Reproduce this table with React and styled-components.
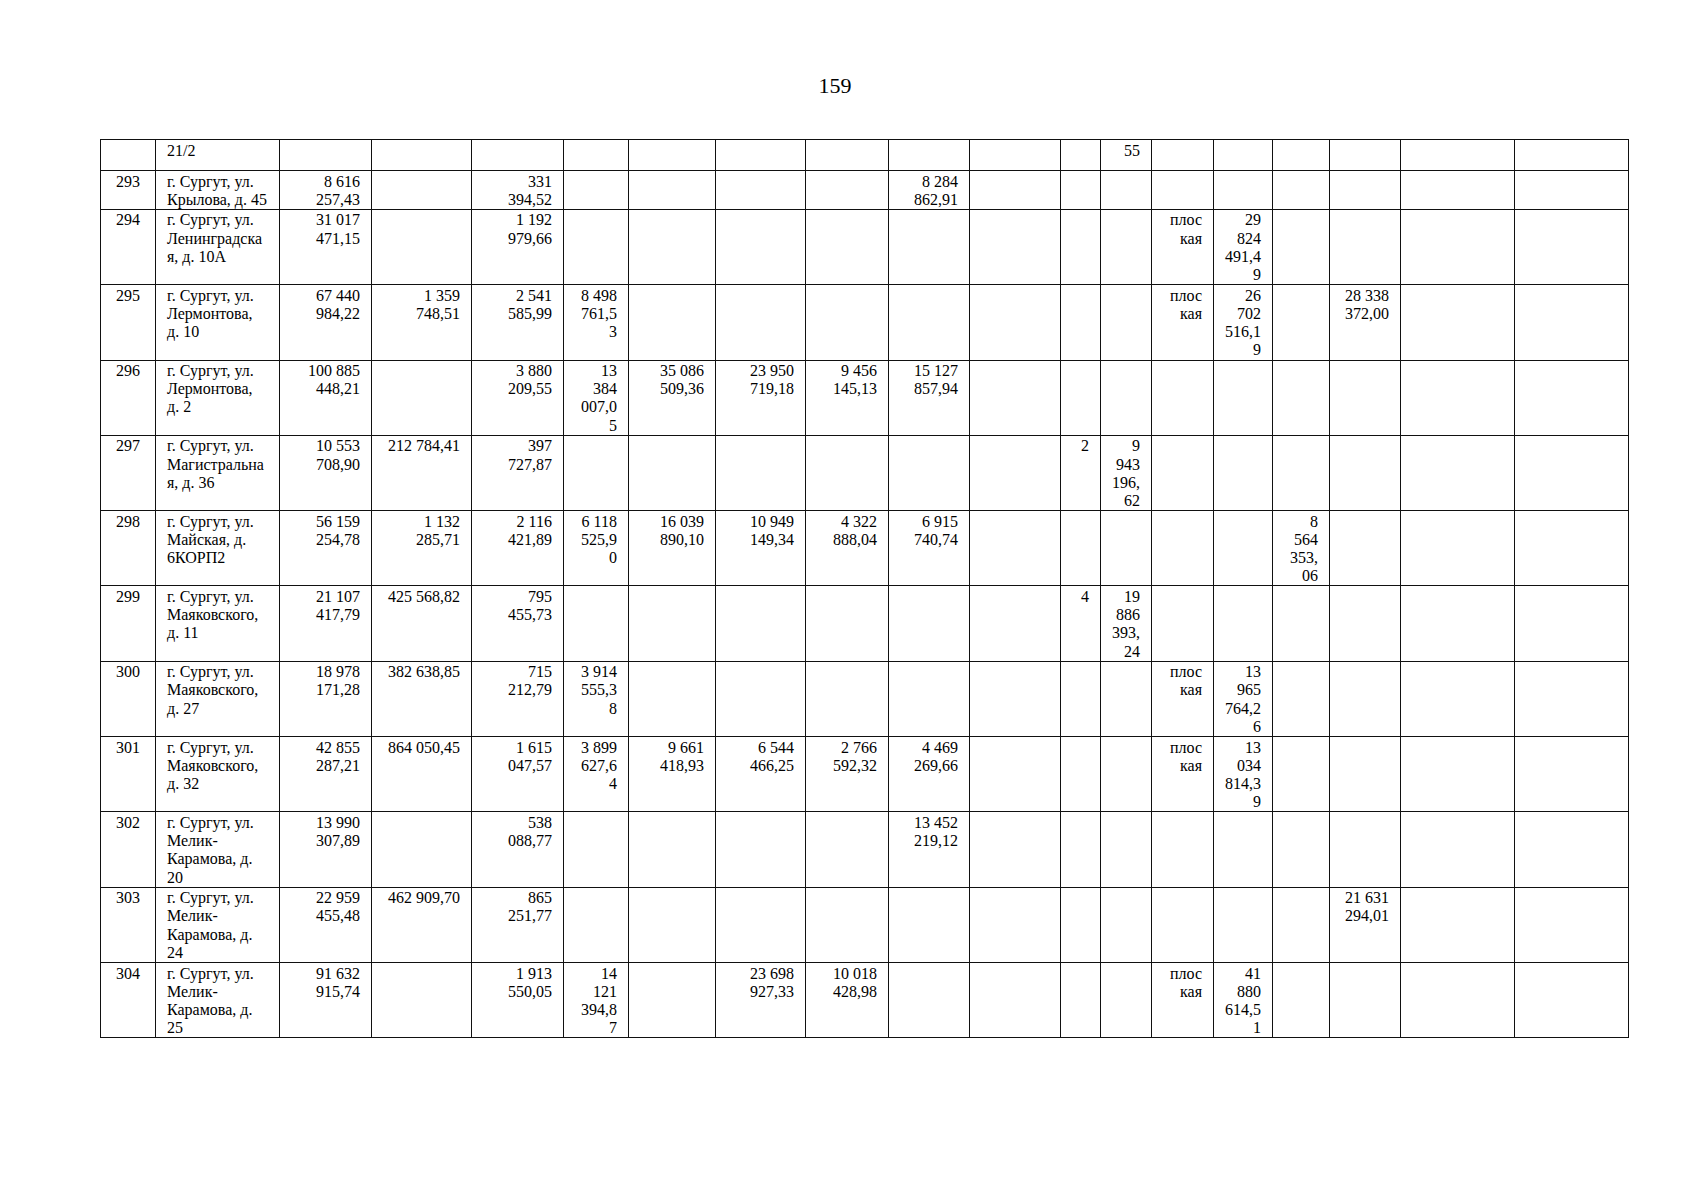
import React from "react";
import styled, { createGlobalStyle } from "styled-components";

const GlobalStyle = createGlobalStyle`
  html, body {
    margin: 0;
    padding: 0;
    background: #fff;
  }
  body {
    font-family: "Liberation Serif", "Times New Roman", serif;
    color: #000;
  }
`;

const Page = styled.div`
  width: 1697px;
  min-height: 1200px;
  padding: 75px 0 0 100px;
  box-sizing: border-box;
`;

const PageNumber = styled.div`
  width: 1470px;
  text-align: center;
  font-size: 22px;
  line-height: 22px;
  height: 22px;
  margin-bottom: 42px;
`;

const Sheet = styled.table`
  width: 1528px;
  table-layout: fixed;
  border-collapse: collapse;
  font-size: 16px;
  line-height: 18.2px;
`;

const Row = styled.tr`
  height: ${props => props.h}px;
`;

const Cell = styled.td`
  border: 1px solid #111;
  padding: 1.5px 11px 0 11px;
  vertical-align: top;
  text-align: ${props => props.align};
  white-space: pre;
  overflow: hidden;
`;

const widths = [55, 124, 92, 100, 92, 65, 87, 90, 83, 81, 91, 40, 51, 62, 59, 57, 71, 114, 114];

const rows = [
  { n: "", addr: "21/2", h: 31, c: { 12: "55" } },
  {
    n: "293",
    addr: "г. Сургут, ул.\nКрылова, д. 45",
    h: 38,
    c: { 2: "8 616\n257,43", 4: "331\n394,52", 9: "8 284\n862,91" }
  },
  {
    n: "294",
    addr: "г. Сургут, ул.\nЛенинградска\nя, д. 10А",
    c: { 2: "31 017\n471,15", 4: "1 192\n979,66", 13: "плос\nкая", 14: "29\n824\n491,4\n9" }
  },
  {
    n: "295",
    addr: "г. Сургут, ул.\nЛермонтова,\nд. 10",
    c: {
      2: "67 440\n984,22",
      3: "1 359\n748,51",
      4: "2 541\n585,99",
      5: "8 498\n761,5\n3",
      13: "плос\nкая",
      14: "26\n702\n516,1\n9",
      16: "28 338\n372,00"
    }
  },
  {
    n: "296",
    addr: "г. Сургут, ул.\nЛермонтова,\nд. 2",
    c: {
      2: "100 885\n448,21",
      4: "3 880\n209,55",
      5: "13\n384\n007,0\n5",
      6: "35 086\n509,36",
      7: "23 950\n719,18",
      8: "9 456\n145,13",
      9: "15 127\n857,94"
    }
  },
  {
    n: "297",
    addr: "г. Сургут, ул.\nМагистральна\nя, д. 36",
    c: { 2: "10 553\n708,90", 3: "212 784,41", 4: "397\n727,87", 11: "2", 12: "9\n943\n196,\n62" }
  },
  {
    n: "298",
    addr: "г. Сургут, ул.\nМайская, д.\n6КОРП2",
    c: {
      2: "56 159\n254,78",
      3: "1 132\n285,71",
      4: "2 116\n421,89",
      5: "6 118\n525,9\n0",
      6: "16 039\n890,10",
      7: "10 949\n149,34",
      8: "4 322\n888,04",
      9: "6 915\n740,74",
      15: "8\n564\n353,\n06"
    }
  },
  {
    n: "299",
    addr: "г. Сургут, ул.\nМаяковского,\nд. 11",
    c: { 2: "21 107\n417,79", 3: "425 568,82", 4: "795\n455,73", 11: "4", 12: "19\n886\n393,\n24" }
  },
  {
    n: "300",
    addr: "г. Сургут, ул.\nМаяковского,\nд. 27",
    c: {
      2: "18 978\n171,28",
      3: "382 638,85",
      4: "715\n212,79",
      5: "3 914\n555,3\n8",
      13: "плос\nкая",
      14: "13\n965\n764,2\n6"
    }
  },
  {
    n: "301",
    addr: "г. Сургут, ул.\nМаяковского,\nд. 32",
    c: {
      2: "42 855\n287,21",
      3: "864 050,45",
      4: "1 615\n047,57",
      5: "3 899\n627,6\n4",
      6: "9 661\n418,93",
      7: "6 544\n466,25",
      8: "2 766\n592,32",
      9: "4 469\n269,66",
      13: "плос\nкая",
      14: "13\n034\n814,3\n9"
    }
  },
  {
    n: "302",
    addr: "г. Сургут, ул.\nМелик-\nКарамова, д.\n20",
    c: { 2: "13 990\n307,89", 4: "538\n088,77", 9: "13 452\n219,12" }
  },
  {
    n: "303",
    addr: "г. Сургут, ул.\nМелик-\nКарамова, д.\n24",
    c: { 2: "22 959\n455,48", 3: "462 909,70", 4: "865\n251,77", 16: "21 631\n294,01" }
  },
  {
    n: "304",
    addr: "г. Сургут, ул.\nМелик-\nКарамова, д.\n25",
    c: {
      2: "91 632\n915,74",
      4: "1 913\n550,05",
      5: "14\n121\n394,8\n7",
      7: "23 698\n927,33",
      8: "10 018\n428,98",
      13: "плос\nкая",
      14: "41\n880\n614,5\n1"
    }
  }
];

const App = () => (
  <Page>
    <GlobalStyle />
    <PageNumber>159</PageNumber>
    <Sheet>
      <colgroup>
        {widths.map((w, i) => (
          <col key={i} style={{ width: w }} />
        ))}
      </colgroup>
      <tbody>
        {rows.map((row, r) => (
          <Row key={r} h={row.h || 75.3}>
            <Cell align="center">{row.n}</Cell>
            <Cell align="left">{row.addr}</Cell>
            {widths.slice(2).map((_, i) => (
              <Cell key={i} align="right">
                {row.c[i + 2] || ""}
              </Cell>
            ))}
          </Row>
        ))}
      </tbody>
    </Sheet>
  </Page>
);

export default App;
